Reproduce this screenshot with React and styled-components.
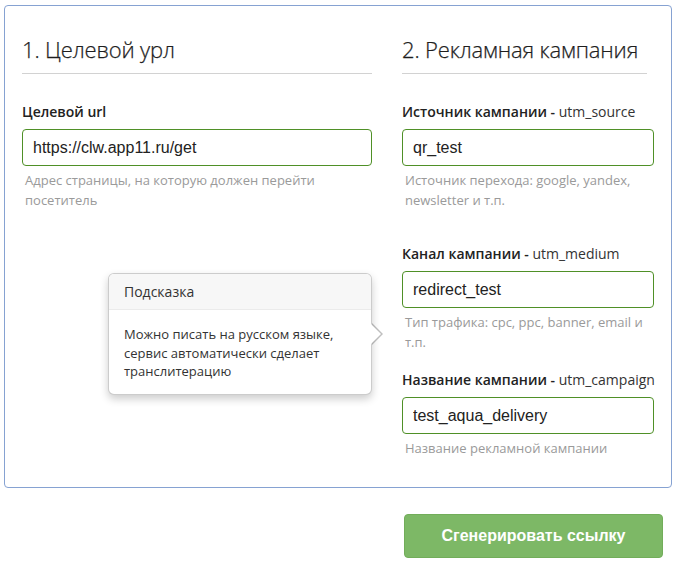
import React from "react";
import styled, { createGlobalStyle } from "styled-components";

const Global = createGlobalStyle`
  html, body { margin: 0; padding: 0; background: #fff; }
  body { font-family: "Open Sans", "Liberation Sans", sans-serif; color: #333; }
  * { box-sizing: border-box; }
`;

const Page = styled.div`
  padding: 5px 0 0 4px;
  width: 678px;
`;

const Panel = styled.div`
  position: relative;
  width: 668px;
  border: 1px solid #86a2d2;
  border-radius: 4px;
  padding: 28px 17px 28px 17px;
  display: grid;
  grid-template-columns: 350px 252px;
  column-gap: 30px;
`;

const Column = styled.div`
  display: flex;
  flex-direction: column;
`;

const SectionTitle = styled.h2`
  margin: 0 ${(p) => p.$inset || 0}px 0 0;
  font-family: "Open Sans", sans-serif;
  font-weight: 300;
  font-size: 22px;
  letter-spacing: -0.15px;
  line-height: 30px;
  white-space: nowrap;
  color: #1e1e1e;
  padding-bottom: 9px;
  border-bottom: 1px solid #d2d2d2;
  -webkit-text-stroke: 0.25px #1e1e1e;
`;

const Field = styled.div`
  display: flex;
  flex-direction: column;
  margin-top: ${(p) => p.$top}px;
`;

const Label = styled.label`
  font-family: "Open Sans", sans-serif;
  font-size: 14px;
  line-height: 20px;
  font-weight: 600;
  color: #222;
  white-space: nowrap;
`;

const LabelSuffix = styled.span`
  font-weight: 400;
  color: #333;
`;

const Input = styled.input`
  margin-top: 7px;
  height: 37px;
  width: 100%;
  border: 1px solid #4f9027;
  border-radius: 4px;
  padding: 0 10px;
  font-family: "Liberation Sans", Arial, sans-serif;
  font-size: 16px;
  color: #222;
  outline: none;
  background: #fff;
`;

const Help = styled.div`
  margin-top: 5px;
  padding-left: 3px;
  font-family: "Open Sans", sans-serif;
  font-size: 13px;
  line-height: 19.5px;
  color: #9a9a9a;
`;

const Popover = styled.div`
  position: absolute;
  left: 103px;
  top: 267px;
  width: 264px;
  height: 122px;
  background: #fff;
  border: 1px solid rgba(0, 0, 0, 0.2);
  border-radius: 6px;
  box-shadow: 0 4px 9px rgba(0, 0, 0, 0.2);
  font-family: "Open Sans", sans-serif;

  &::before,
  &::after {
    content: "";
    position: absolute;
    top: 50%;
    width: 0;
    height: 0;
    border-style: solid;
    border-color: transparent;
  }
  &::before {
    right: -12px;
    margin-top: -11px;
    border-width: 11px 0 11px 11px;
    border-left-color: rgba(0, 0, 0, 0.25);
  }
  &::after {
    right: -10px;
    margin-top: -10px;
    border-width: 10px 0 10px 10px;
    border-left-color: #fff;
  }
`;

const PopoverTitle = styled.div`
  height: 36px;
  padding: 0 15px;
  display: flex;
  align-items: center;
  background: #f7f7f7;
  border-bottom: 1px solid #ebebeb;
  border-radius: 5px 5px 0 0;
  font-size: 14px;
  color: #333;
`;

const PopoverBody = styled.div`
  padding: 15px 15px;
  font-size: 13px;
  line-height: 18.5px;
  color: #333;
`;

const Actions = styled.div`
  display: flex;
  padding: 26px 0 0 400px;
`;

const Button = styled.button`
  width: 259px;
  height: 44px;
  border: 1px solid #72ad5a;
  border-radius: 4px;
  background: #7db866;
  color: #fff;
  font-family: "Liberation Sans", Arial, sans-serif;
  font-weight: 700;
  font-size: 16px;
  cursor: pointer;
`;

export default function App() {
  return (
    <Page>
      <Global />
      <Panel>
        <Column>
          <SectionTitle>1. Целевой урл</SectionTitle>
          <Field $top={28}>
            <Label>Целевой url</Label>
            <Input defaultValue="https://clw.app11.ru/get" />
            <Help>Адрес страницы, на которую должен перейти посетитель</Help>
          </Field>
        </Column>
        <Column>
          <SectionTitle $inset={7}>2. Рекламная кампания</SectionTitle>
          <Field $top={28}>
            <Label>
              Источник кампании - <LabelSuffix>utm_source</LabelSuffix>
            </Label>
            <Input defaultValue="qr_test" />
            <Help>Источник перехода: google, yandex, newsletter и т.п.</Help>
          </Field>
          <Field $top={34}>
            <Label>
              Канал кампании - <LabelSuffix>utm_medium</LabelSuffix>
            </Label>
            <Input defaultValue="redirect_test" />
            <Help>Тип трафика: cpc, ppc, banner, email и т.п.</Help>
          </Field>
          <Field $top={18}>
            <Label>
              Название кампании - <LabelSuffix>utm_campaign</LabelSuffix>
            </Label>
            <Input defaultValue="test_aqua_delivery" />
            <Help>Название рекламной кампании</Help>
          </Field>
        </Column>
        <Popover>
          <PopoverTitle>Подсказка</PopoverTitle>
          <PopoverBody>
            Можно писать на русском языке, сервис автоматически сделает
            транслитерацию
          </PopoverBody>
        </Popover>
      </Panel>
      <Actions>
        <Button>Сгенерировать ссылку</Button>
      </Actions>
    </Page>
  );
}
